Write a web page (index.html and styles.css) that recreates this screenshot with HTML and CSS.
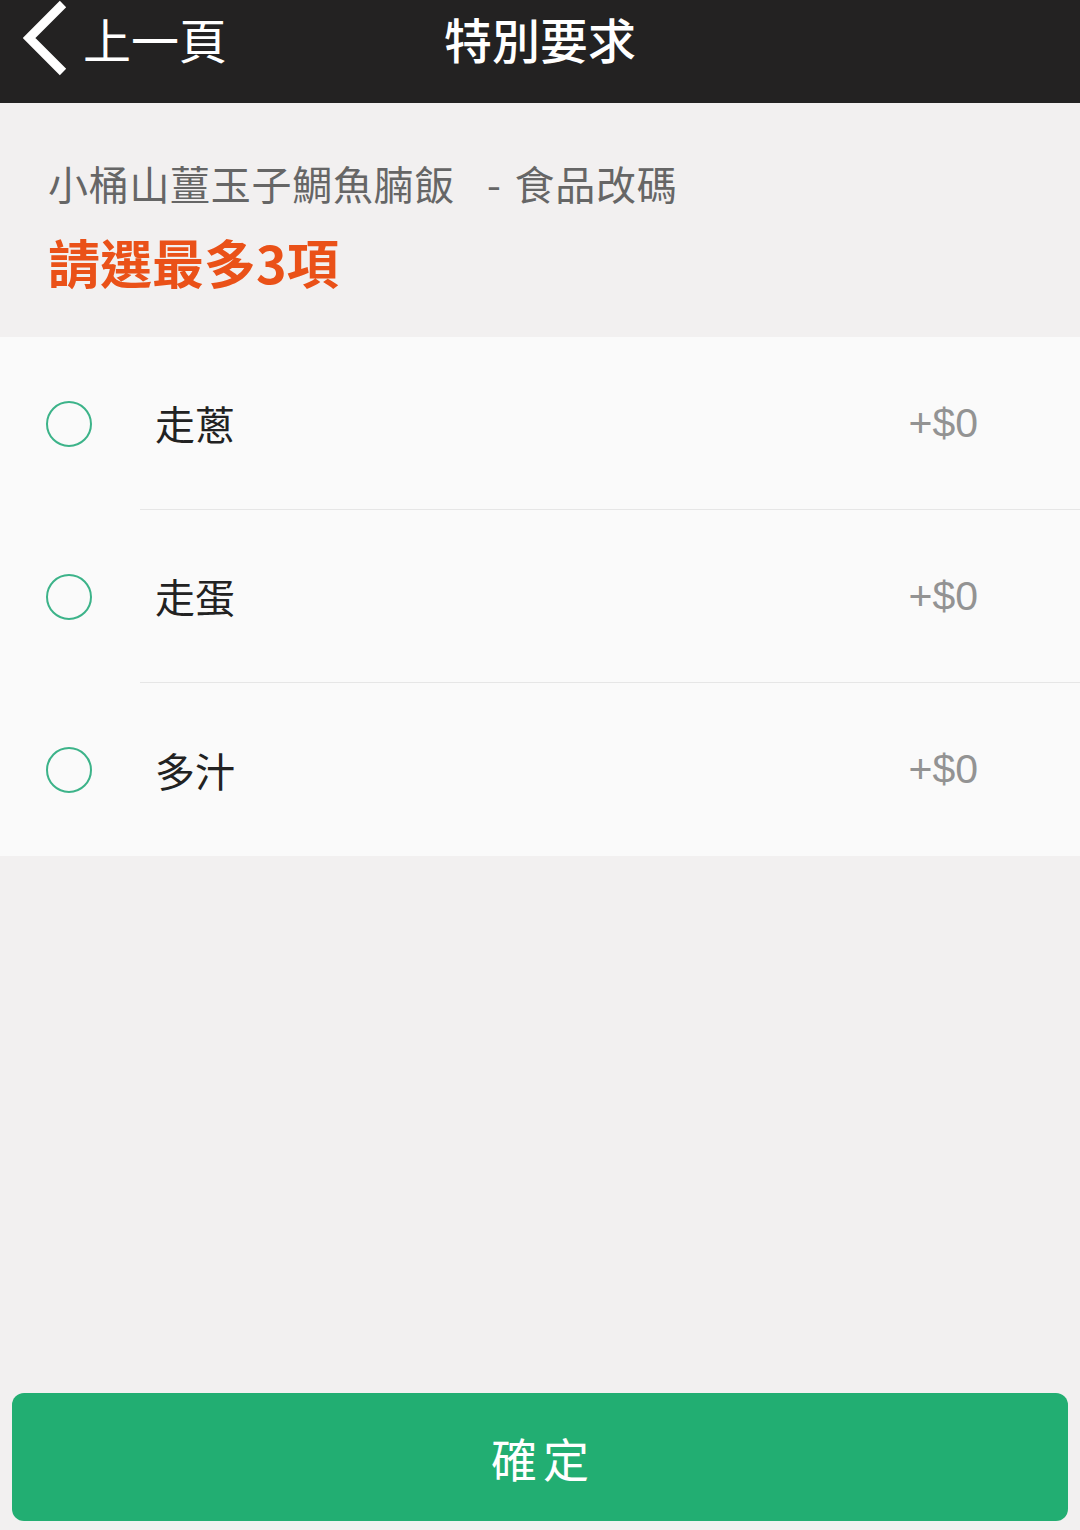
FILE: index.html
```html
<!DOCTYPE html>
<html lang="zh-Hant">

<head>
    <meta charset="UTF-8">
    <meta name="viewport" content="width=device-width, initial-scale=1.0">
    <title>特別要求</title>
    <link rel="stylesheet" href="styles.css">
</head>

<body>
    <div class="page">
        <div class="topbar">
            <div class="back">
                <svg class="chevron" width="48" height="76" viewBox="0 0 48 76">
                    <path d="M40 4 L6 38 L40 72" fill="none" stroke="#fff" stroke-width="9" stroke-linejoin="miter"/>
                </svg>
                <span>上一頁</span>
            </div>
            <div class="title">特別要求</div>
            <div></div>
        </div>

        <div class="intro">
            <div class="dish">小桶山薑玉子鯛魚腩飯<span class="sep">-</span>食品改碼</div>
            <div class="limit">請選最多3項</div>
        </div>

        <div class="options">
            <div class="option">
                <div class="radio"></div>
                <div class="option-body">
                    <span class="label">走蔥</span>
                    <span class="price">+$0</span>
                </div>
            </div>
            <div class="option">
                <div class="radio"></div>
                <div class="option-body">
                    <span class="label">走蛋</span>
                    <span class="price">+$0</span>
                </div>
            </div>
            <div class="option">
                <div class="radio"></div>
                <div class="option-body">
                    <span class="label">多汁</span>
                    <span class="price">+$0</span>
                </div>
            </div>
        </div>

        <div class="spacer"></div>

        <button class="confirm">確定</button>
    </div>
</body>

</html>
```

FILE: styles.css
```css
body {
    margin: 0;
    padding: 0;
    background-color: #f2f0f0;
    font-family: "Noto Sans CJK TC", "Noto Sans", sans-serif;
}

.page {
    display: flex;
    flex-direction: column;
    min-height: 100vh;
}

.topbar {
    height: 103px;
    background-color: #232222;
    color: white;
    display: grid;
    grid-template-columns: 1fr auto 1fr;
    align-items: start;
}

.back {
    display: flex;
    align-items: center;
    height: 76px;
    padding-left: 23px;
    font-size: 48px;
}

.chevron {
    margin-right: 12px;
}

.title {
    height: 76px;
    line-height: 76px;
    font-size: 48px;
    font-weight: 500;
}

.intro {
    padding: 56px 48px 44px;
}

.dish {
    font-size: 40px;
    line-height: 48px;
    letter-spacing: 0.7px;
    color: #666666;
}

.sep {
    margin: 0 13px 0 32px;
}

.limit {
    margin-top: 24px;
    font-size: 52px;
    line-height: 62px;
    font-weight: bold;
    color: #ea5118;
}

.options {
    background-color: #fafafa;
}

.option {
    display: flex;
    align-items: stretch;
    height: 173px;
}

.radio {
    align-self: center;
    width: 42px;
    height: 42px;
    margin-left: 46px;
    margin-right: 48px;
    border: 2px solid #3cb389;
    border-radius: 50%;
}

.option-body {
    flex: 1;
    display: flex;
    align-items: center;
    justify-content: space-between;
    padding-left: 15px;
    padding-right: 102px;
    border-bottom: 1px solid #e6e6e6;
}

.option:last-child .option-body {
    border-bottom: none;
}

.label {
    font-size: 40px;
    color: #222222;
}

.price {
    font-family: "Liberation Sans", sans-serif;
    font-size: 41px;
    color: #939393;
}

.spacer {
    flex: 1;
}

.confirm {
    margin: 0 12px 9px;
    height: 128px;
    border: none;
    border-radius: 12px;
    background-color: #22ae72;
    color: white;
    font-family: "Noto Sans CJK TC", sans-serif;
    font-size: 46px;
    letter-spacing: 6px;
    text-indent: 6px;
}
```
